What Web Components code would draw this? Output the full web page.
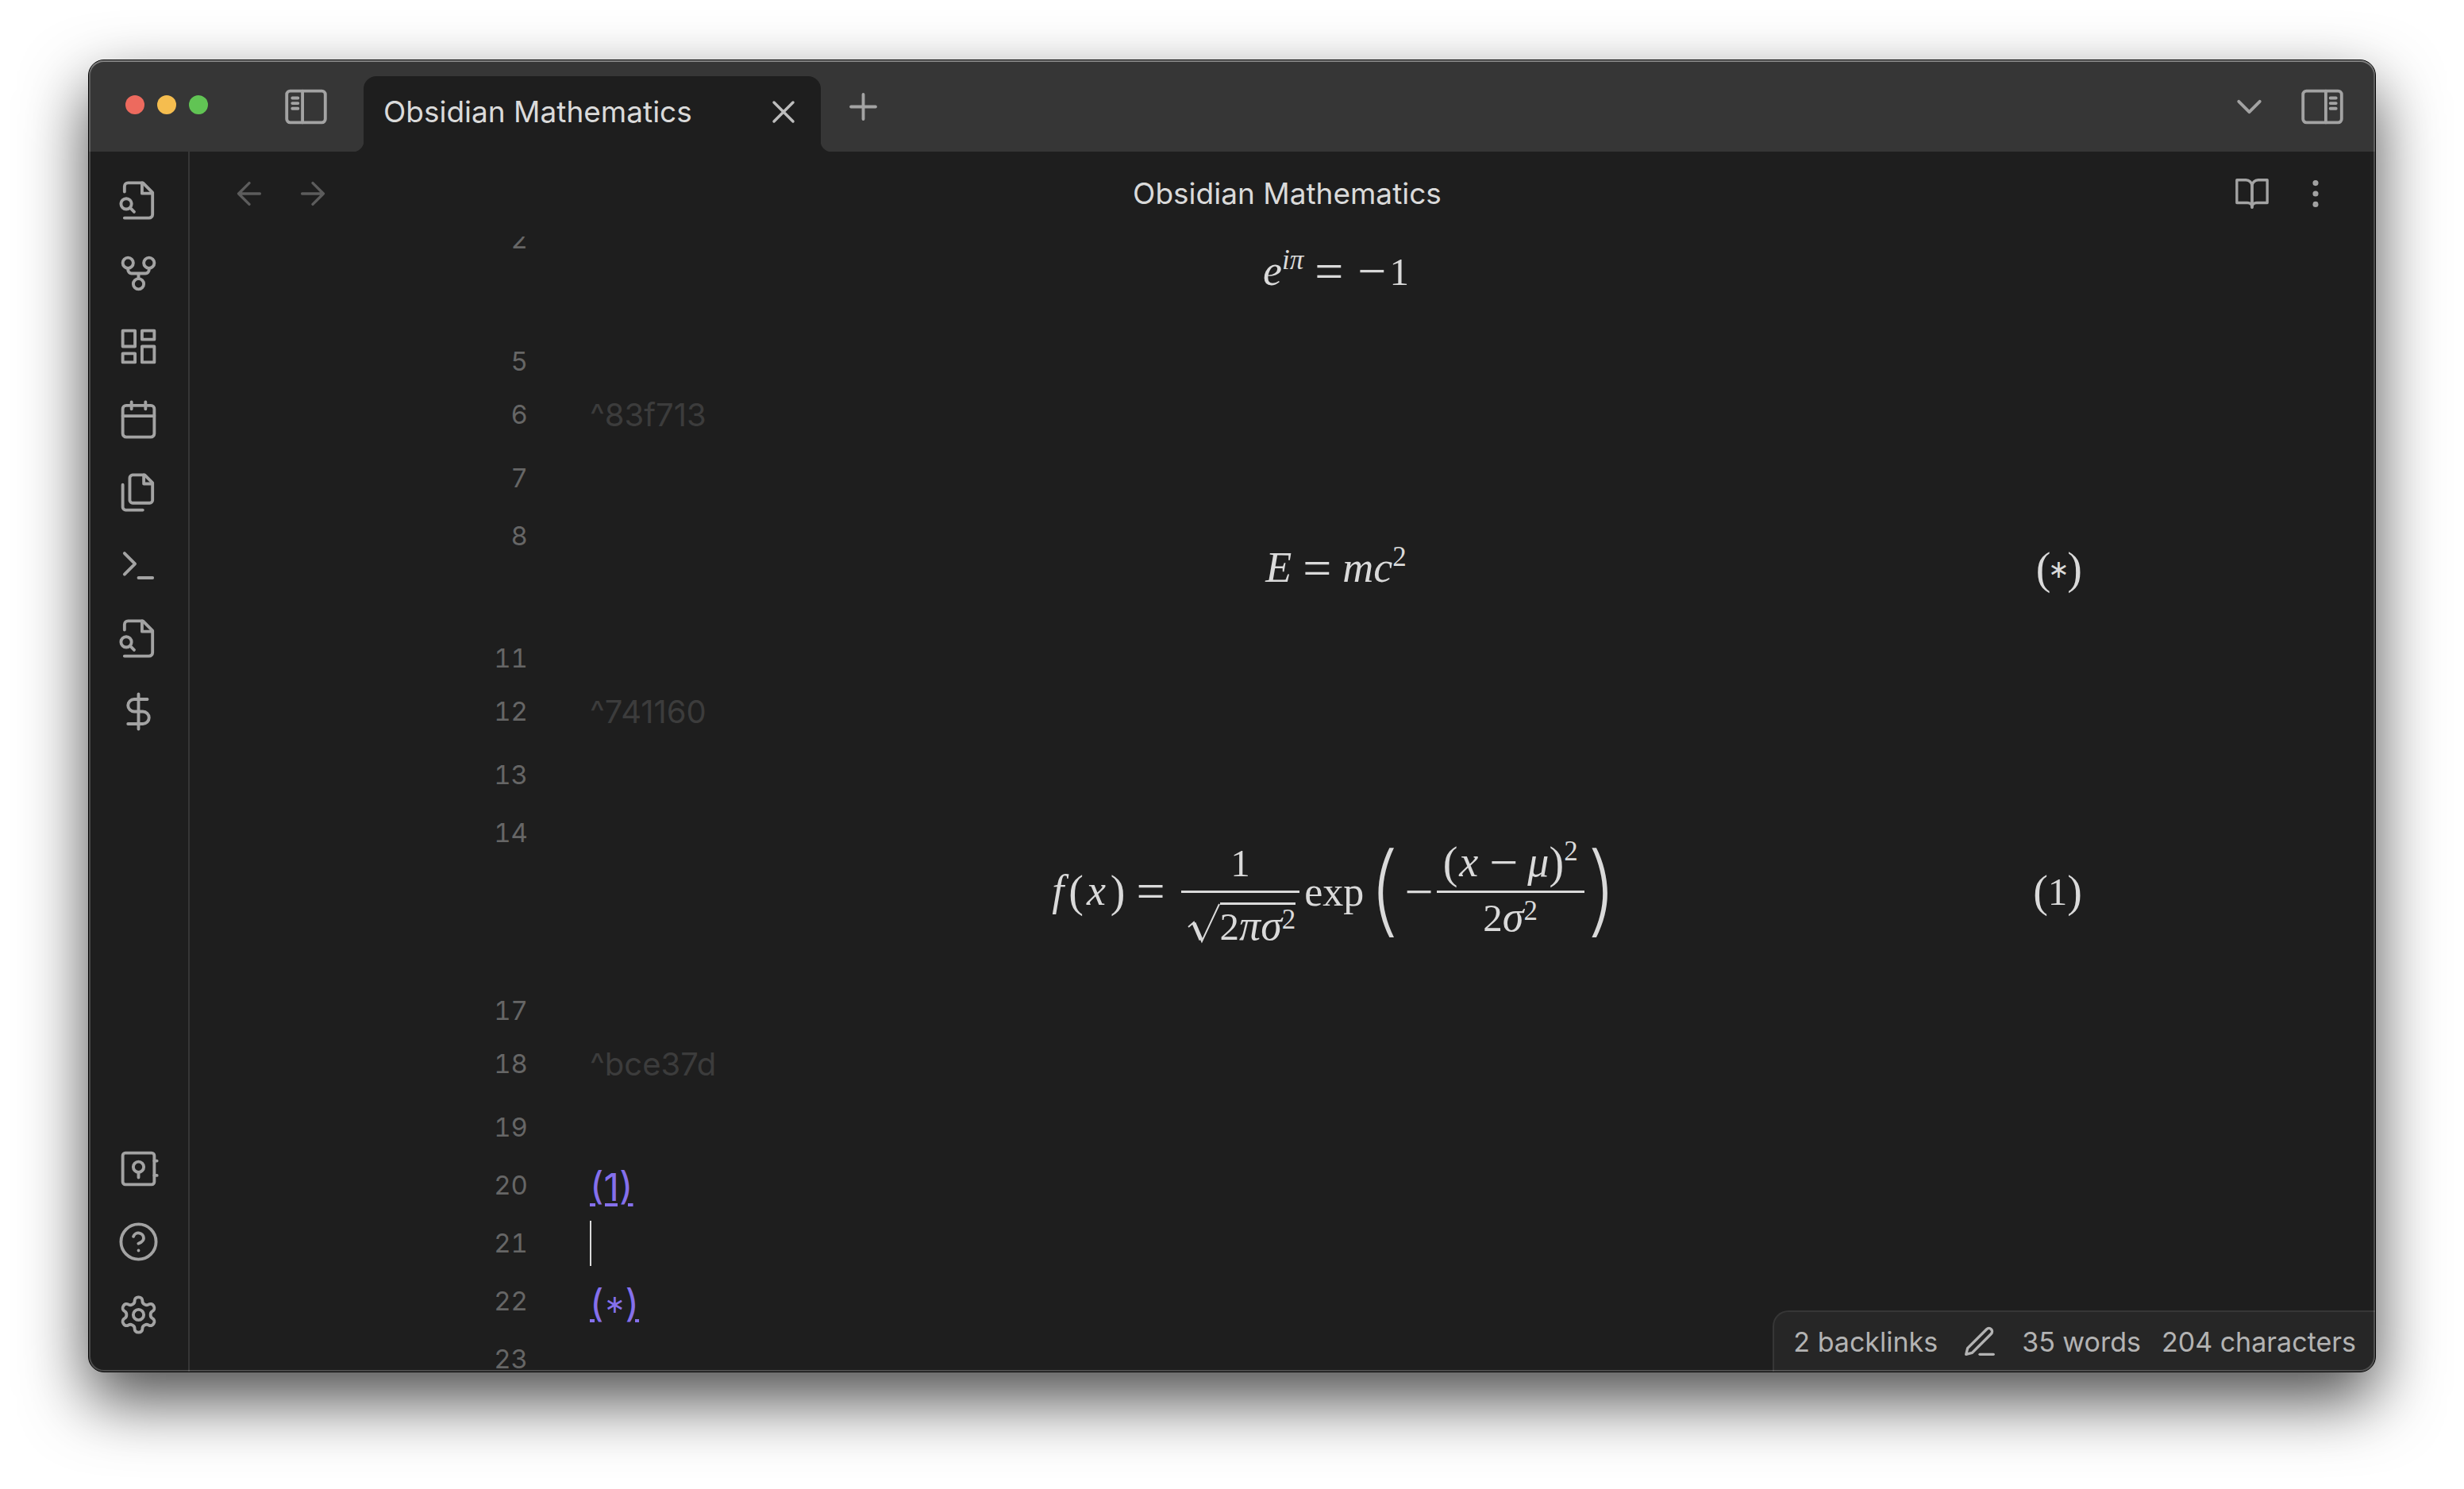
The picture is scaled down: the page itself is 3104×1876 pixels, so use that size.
<!DOCTYPE html>
<html lang="en">
<head>
<meta charset="utf-8">
<title>Obsidian Mathematics</title>
<style>
  html, body { margin: 0; height: 100%; background: #fff; }
  body {
    --bg: #1e1e1e; --bar: #363636; --line: #363636; --text: #dadada; --muted: #b3b3b3;
    --icon: #a3a3a3; --faint: #666; --accent: #8570ec;
    font-family: Inter, "Liberation Sans", sans-serif; font-size: 37px; color: var(--text);
    overflow: hidden;
  }
</style>
</head>
<body>
<app-window>
  <title-bar slot="titlebar" label="Obsidian Mathematics"></title-bar>
  <side-ribbon slot="ribbon"></side-ribbon>
  <view-header slot="header">Obsidian Mathematics</view-header>
  <note-editor slot="editor">
    <note-line n="2" kind="math"><math-block>
      <i>e<sup>iπ</sup></i><b class="rel">=</b><b class="neg">−</b>1
    </math-block></note-line>
    <note-line n="5" kind="short"></note-line>
    <note-line n="6" kind="id">^83f713</note-line>
    <note-line n="7"></note-line>
    <note-line n="8" kind="math"><math-block tag="∗">
      <i>E</i><b class="rel">=</b><i>mc</i><sup>2</sup>
    </math-block></note-line>
    <note-line n="11" kind="short"></note-line>
    <note-line n="12" kind="id">^741160</note-line>
    <note-line n="13"></note-line>
    <note-line n="14" kind="tall"><math-block tag="1" formula="gauss"></math-block></note-line>
    <note-line n="17" kind="short"></note-line>
    <note-line n="18" kind="id">^bce37d</note-line>
    <note-line n="19"></note-line>
    <note-line n="20" kind="link" href="#bce37d">(1)</note-line>
    <note-line n="21" kind="cursor"></note-line>
    <note-line n="22" kind="link" href="#741160">(<small>∗</small>)</note-line>
    <note-line n="23"></note-line>
  </note-editor>
  <status-bar slot="status"></status-bar>
</app-window>

<script>
const ICONS = {
  left: '<rect x="1" y="3" width="22" height="18" rx="2"/><path d="M10 3v18M4.2 7h3.2M4.2 10h3.2M4.2 13h3.2"/>',
  right: '<rect x="1" y="3" width="22" height="18" rx="2"/><path d="M14 3v18M16.6 7h3.2M16.6 10h3.2M16.6 13h3.2"/>',
  x: '<path d="M18 6 6 18M6 6l12 12"/>',
  plus: '<path d="M12 5v14M5 12h14"/>',
  down: '<path d="m6 9 6 6 6-6"/>',
  back: '<path d="M19 12H5M12 19l-7-7 7-7"/>',
  forward: '<path d="M5 12h14M12 5l7 7-7 7"/>',
  book: '<path d="M2 3h6a4 4 0 0 1 4 4v14a3 3 0 0 0-3-3H2z"/><path d="M22 3h-6a4 4 0 0 0-4 4v14a3 3 0 0 1 3-3h7z"/>',
  more: '<circle cx="12" cy="12" r="1"/><circle cx="12" cy="5" r="1"/><circle cx="12" cy="19" r="1"/>',
  search: '<path d="M4 22h14a2 2 0 0 0 2-2V7.5L14.5 2H6a2 2 0 0 0-2 2v3"/><path d="M14 2v6h6"/><circle cx="5" cy="14" r="3"/><path d="m9.500 18.500-2-2"/>',
  fork: '<circle cx="12" cy="18" r="3"/><circle cx="6" cy="6" r="3"/><circle cx="18" cy="6" r="3"/><path d="M18 9v1a2 2 0 0 1-2 2H8a2 2 0 0 1-2-2V9M12 12v3"/>',
  board: '<path d="M3 3h7v9H3zM14 3h7v5h-7zM14 12h7v9h-7zM3 16h7v5H3z"/>',
  calendar: '<rect x="3" y="4" width="18" height="18" rx="2"/><path d="M16 2v4M8 2v4M3 10h18"/>',
  files: '<path d="M15.5 2H8.600c-.4 0-.8.2-1.100.5-.3.3-.5.7-.5 1.100v12.800c0 .4.2.8.5 1.100.3.3.7.5 1.100.5h9.800c.4 0 .8-.2 1.100-.5.3-.3.5-.7.5-1.100V6.500L15.500 2z"/><path d="M3 7.600v12.800c0 .4.2.8.5 1.100.3.3.7.5 1.100.5h9.800M15 2v5h5"/>',
  terminal: '<path d="m4 17 6-6-6-6M12 19h8"/>',
  dollar: '<path d="M12 2v20M17 5H9.500a3.500 3.500 0 0 0 0 7h5a3.500 3.500 0 0 1 0 7H6"/>',
  vault: '<rect x="3" y="3" width="18" height="18" rx="1.500"/><circle cx="12" cy="11" r="3"/><path d="M12 14v3M21 7.500h1.500M21 15.800h1.500"/>',
  help: '<circle cx="12" cy="12" r="10"/><path d="M9.090 9a3 3 0 0 1 5.830 1c0 2-3 3-3 3M12 17h.01"/>',
  gear: '<path d="M12.22 2h-.44a2 2 0 0 0-2 2v.18a2 2 0 0 1-1 1.73l-.43.25a2 2 0 0 1-2 0l-.15-.08a2 2 0 0 0-2.73.73l-.22.38a2 2 0 0 0 .73 2.73l.15.1a2 2 0 0 1 1 1.72v.51a2 2 0 0 1-1 1.74l-.15.09a2 2 0 0 0-.73 2.73l.22.38a2 2 0 0 0 2.73.73l.15-.08a2 2 0 0 1 2 0l.43.25a2 2 0 0 1 1 1.73V20a2 2 0 0 0 2 2h.44a2 2 0 0 0 2-2v-.18a2 2 0 0 1 1-1.73l.43-.25a2 2 0 0 1 2 0l.15.08a2 2 0 0 0 2.73-.73l.22-.39a2 2 0 0 0-.73-2.73l-.15-.08a2 2 0 0 1-1-1.74v-.5a2 2 0 0 1 1-1.74l.15-.09a2 2 0 0 0 .73-2.73l-.22-.38a2 2 0 0 0-2.73-.73l-.15.08a2 2 0 0 1-2 0l-.43-.25a2 2 0 0 1-1-1.73V4a2 2 0 0 0-2-2z"/><circle cx="12" cy="12" r="3"/>',
  pencil: '<path d="M12 20h9"/><path d="M16.500 3.500a2.120 2.120 0 0 1 3 3L7 19l-4 1 1-4L16.500 3.500z"/>'
};

class Base extends HTMLElement {
  connectedCallback() {
    if (this.shadowRoot) return;
    this.attachShadow({ mode: "open" }).innerHTML = this.render();
  }
}
const define = (name, render) =>
  customElements.define(name, class extends Base { render() { return render(this); } });

/* A real button that holds one line icon. */
define("icon-button", el => `<style>
  :host { display: block; flex: none; color: var(--icon); }
  button { all: unset; display: flex; align-items: center; justify-content: center; width: 100%; height: 100%; color: inherit; cursor: pointer; }
  svg { display: block; width: var(--size, 53px); height: var(--size, 53px); fill: none; stroke: currentColor; stroke-width: 1.75; stroke-linecap: round; stroke-linejoin: round; }
</style><button type="button" aria-label="${el.getAttribute("label")}"><svg viewBox="0 0 24 24">${ICONS[el.getAttribute("icon")]}</svg></button>`);

define("app-window", () => `<style>
  :host { display: block; box-sizing: border-box; height: 100vh; padding: 75px 111px 147px; }
  .window { position: relative; box-sizing: border-box; height: 100%; display: flex; flex-direction: column;
    border: 1px solid #000; border-radius: 20px; background: var(--bg); box-shadow: 0 35px 82px rgba(0,0,0,.7); }
  .clip { flex: 1; min-height: 0; display: flex; flex-direction: column; border-radius: 19px; overflow: hidden; }
  .body { flex: 1; min-height: 0; display: flex; }
  .pane { flex: 1; min-width: 0; display: flex; flex-direction: column; }
  .status { position: absolute; right: 0; bottom: 0; }
  .rim { position: absolute; inset: 0; border-radius: 19px; pointer-events: none;
    box-shadow: inset 0 0 0 2px rgba(255,255,255,.2), inset 0 2px 0 rgba(255,255,255,.22); }
</style>
<div class="window">
  <div class="clip">
    <slot name="titlebar"></slot>
    <div class="body"><slot name="ribbon"></slot><div class="pane"><slot name="header"></slot><slot name="editor"></slot></div></div>
  </div>
  <div class="status"><slot name="status"></slot></div>
  <div class="rim"></div>
</div>`);

define("title-bar", el => `<style>
  :host { display: flex; align-items: center; box-sizing: border-box; height: 115px; padding: 2px 40px 0 46px; background: var(--bar); }
  .lights { display: flex; gap: 16px; margin: 0 97px 5px 0; }
  .lights span { width: 24px; height: 24px; border-radius: 50%; }
  .tab { position: relative; align-self: flex-end; box-sizing: border-box; display: flex; align-items: center; width: 576px; height: 95px;
    margin: 0 27px 0 46px; padding: 0 23px 6px 25px; border-radius: 16px 16px 0 0; background: var(--bg); }
  .tab::before, .tab::after { content: ""; position: absolute; bottom: 0; width: 14px; height: 14px; }
  .tab::before { right: 100%; background: radial-gradient(circle at 0 0, transparent 14px, var(--bg) 15px); }
  .tab::after { left: 100%; background: radial-gradient(circle at 100% 0, transparent 14px, var(--bg) 15px); }
  .name { flex: 1; white-space: nowrap; }
  .close { --size: 48px; --icon: #bdbdbd; }
  .fill { flex: 1; }
  .down { margin-right: 39px; }
</style>
<div class="lights"><span style="background:#ed6a5e"></span><span style="background:#f5bd4f"></span><span style="background:#61c454"></span></div>
<icon-button icon="left" label="Toggle left sidebar"></icon-button>
<div class="tab" role="tab" aria-selected="true"><span class="name">${el.getAttribute("label")}</span><icon-button class="close" icon="x" label="Close tab"></icon-button></div>
<icon-button icon="plus" label="New tab"></icon-button>
<div class="fill"></div>
<icon-button class="down" icon="down" label="Tab list"></icon-button>
<icon-button icon="right" label="Toggle right sidebar"></icon-button>`);

define("side-ribbon", () => {
  const b = ([icon, label]) => `<icon-button icon="${icon}" label="${label}"></icon-button>`;
  return `<style>
  :host { display: flex; flex: none; flex-direction: column; justify-content: space-between; box-sizing: border-box; width: 127px; padding: 25px 0 36px; border-right: 2px solid var(--line); }
  nav { display: flex; flex-direction: column; gap: 20px; }
  icon-button { height: 72px; }
</style>
<nav aria-label="Actions">${[["search", "Quick switcher"], ["fork", "Graph view"], ["board", "Canvas"], ["calendar", "Daily note"], ["files", "Templates"], ["terminal", "Command palette"], ["search", "Search equations"], ["dollar", "Math settings"]].map(b).join("")}</nav>
<nav aria-label="Application">${[["vault", "Open vault"], ["help", "Help"], ["gear", "Settings"]].map(b).join("")}</nav>`;
});

define("view-header", () => `<style>
  :host { display: flex; flex: none; align-items: center; box-sizing: border-box; height: 107px; padding: 0 35px 2px; }
  icon-button { --size: 46px; width: 80px; height: 80px; }
  .dim { --icon: #5c5c5c; }
  .title { flex: 1; padding-left: 12px; text-align: center; }
</style>
<icon-button class="dim" icon="back" label="Back"></icon-button><icon-button class="dim" icon="forward" label="Forward"></icon-button>
<div class="title"><slot></slot></div>
<icon-button icon="book" label="Reading view"></icon-button><icon-button icon="more" label="More options"></icon-button>`);

define("note-editor", () => `<style>
  :host { display: block; flex: 1; min-height: 0; overflow: hidden; }
  .sizer { max-width: 2015px; margin: -33px auto 0; }
</style><div class="sizer"><slot></slot></div>`);

define("note-line", el => {
  const kind = el.getAttribute("kind");
  const body = kind === "link" ? `<a href="${el.getAttribute("href")}"><slot></slot></a>`
    : kind === "cursor" ? `<span class="caret"></span>` : `<slot></slot>`;
  return `<style>
  :host { display: flex; height: 73px; line-height: 73px; }
  :host([kind="short"]) { height: 67px; }
  :host([kind="id"]) { height: 80px; color: #3c3c3c; font-size: 40px; }
  :host([kind="math"]) { height: 154px; }
  :host([kind="tall"]) { height: 224px; }
  .n { flex: none; box-sizing: border-box; width: 135px; padding-right: 78px; text-align: right; font-size: 33px; font-variant-numeric: tabular-nums; color: var(--faint); }
  .body { flex: 1; min-width: 0; }
  :host([kind="link"]) .body { padding-top: 2px; }
  a { font-size: 48px; color: var(--accent); text-decoration: underline; text-decoration-thickness: 4px; text-underline-offset: 3px; }
  ::slotted(small) { display: inline-block; font-size: 32px; line-height: 0; vertical-align: 5px; }
  .caret { display: block; width: 2px; height: 57px; margin-top: 8px; background: var(--text); }
</style><div class="n">${el.getAttribute("n")}</div><div class="body">${body}</div>`;
});

const MATH_CSS = `
  i { font-style: italic; font-size: 54px; line-height: 0; }
  b { font-weight: 400; font-size: 64px; line-height: 0; vertical-align: -4px; }
  .rel { margin: 0 14px; }
  .bin { margin: 0 12px; }
  .neg { margin: 0 4px; }
  sup { font-size: 35px; line-height: 0; vertical-align: 20px; }
  .p { font-size: 56px; line-height: 0; vertical-align: -2px; }`;

define("math-block", el => {
  const gauss = `
    <span class="fx"><i>f</i><span class="p">(</span><i class="x">x</i><span class="p">)</span><b class="rel">=</b></span>
    <span class="frac"><span class="num">1</span><span class="bar"></span><span class="root"><svg viewBox="0 0 41 52" width="41" height="52"><path d="M1 31 8 25 18 49 40 2" fill="none" stroke="currentColor" stroke-width="2"/><path d="M8 26 17 47" stroke="currentColor" stroke-width="5"/></svg><span class="under">2<i>πσ</i><sup class="low">2</sup></span></span></span>
    <span class="exp">exp</span>
    <span class="big">(</span><b class="neg">−</b>
    <span class="frac"><span class="num"><span class="p">(</span><i class="x">x</i><b class="bin">−</b><i>μ</i><span class="p">)</span><sup>2</sup></span><span class="bar"></span><span class="den">2<i>σ</i><sup class="low">2</sup></span></span>
    <span class="big">)</span>`;
  const tag = el.getAttribute("tag");
  return `<style>${MATH_CSS}
  :host { display: grid; grid-template-columns: 1fr auto 1fr; align-items: center; box-sizing: border-box; height: 154px; padding-top: 1px; font: 49px/60px "Liberation Serif", "Times New Roman", serif; white-space: nowrap; }
  :host([formula]) { height: 224px; padding: 0 0 3px; }
  .eq { grid-column: 2; }
  .tag { grid-column: 3; justify-self: end; }
  .star { margin: 0 -3px; font: 32px/0 Inter, sans-serif; vertical-align: 5px; }
  .gauss { display: flex; align-items: center; }
  .x { margin: 0 2px; }
  .fx i { margin-right: 6px; }
  .fx .x { margin-left: 4px; }
  .fx .rel { margin: 0 20px 0 14px; }
  .frac { display: grid; grid-template-rows: 1fr auto 1fr; justify-items: center; }
  .frac .num { align-self: end; padding: 0 8px 4px; }
  .frac .den { padding: 2px 8px 0; }
  .bar { justify-self: stretch; height: 3px; background: currentColor; }
  .root { display: flex; align-items: flex-start; padding: 12px 5px 0 8px; }
  .under { border-top: 3px solid; line-height: 56px; }
  .low { vertical-align: 14px; }
  .exp { margin: 0 2px 0 6px; font-size: 52px; }
  .big { margin: 0 2px 10px; font: 200 124px/120px Inter, sans-serif; }
</style><div class="eq ${el.hasAttribute("formula") ? "gauss" : ""}">${el.hasAttribute("formula") ? gauss : el.innerHTML.trim()}</div>
${tag ? `<div class="tag"><span class="p">(</span><span class="${tag === "1" ? "" : "star"}">${tag}</span><span class="p">)</span></div>` : ""}`;
});

define("status-bar", () => `<style>
  :host { display: flex; align-items: center; box-sizing: border-box; height: 77px; padding: 0 24px; font-size: 34px; color: var(--muted);
    background: #262626; border: solid var(--line); border-width: 2px 0 0 2px; border-radius: 20px 0 19px 0; white-space: nowrap; }
  icon-button { --size: 46px; --icon: var(--muted); margin: 0 30px; }
  .words { margin-right: 26px; }
</style><span>2 backlinks</span><icon-button icon="pencil" label="Editing mode"></icon-button><span class="words">35 words</span><span>204 characters</span>`);
</script>
</body>
</html>
